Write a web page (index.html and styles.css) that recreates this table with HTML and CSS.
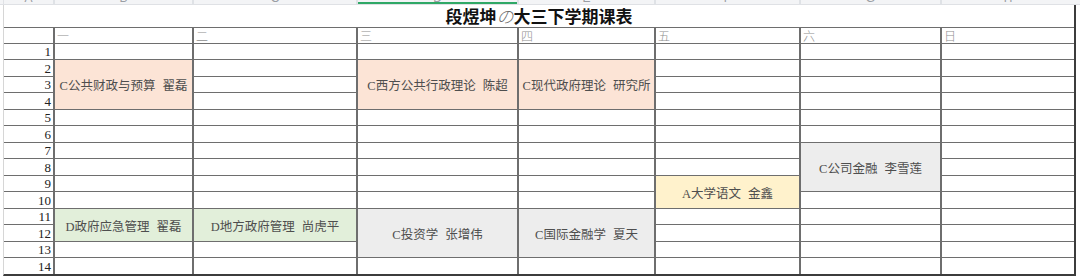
FILE: index.html
```html
<!DOCTYPE html>
<html lang="zh">
<head>
<meta charset="utf-8">
<title>段煜坤の大三下学期课表</title>
<link rel="stylesheet" href="styles.css">
</head>
<body>
<div class="page">
  <div class="colbar-wrap">
    <div class="colbar">
      <div class="ch"><span>A</span></div>
      <div class="ch"><span>B</span></div>
      <div class="ch"><span>C</span></div>
      <div class="ch sel"><span>D</span></div>
      <div class="ch"><span>E</span></div>
      <div class="ch"><span>F</span></div>
      <div class="ch"><span>G</span></div>
      <div class="ch"><span>H</span></div>
    </div>
  </div>
  <div class="sheet">
    <div class="title"><b>段煜坤</b><span class="no">の</span><b>大三下学期课表</b></div>

    <div class="c"></div>
    <div class="c day">一</div>
    <div class="c day">二</div>
    <div class="c day">三</div>
    <div class="c day">四</div>
    <div class="c day">五</div>
    <div class="c day">六</div>
    <div class="c day">日</div>

    <!-- row 1 -->
    <div class="c num">1</div>
    <div class="c"></div><div class="c"></div><div class="c"></div><div class="c"></div><div class="c"></div><div class="c"></div><div class="c"></div>

    <!-- row 2 -->
    <div class="c num">2</div>
    <div class="c course peach span3">C公共财政与预算<span class="t">翟磊</span></div>
    <div class="c"></div>
    <div class="c course peach span3">C西方公共行政理论<span class="t">陈超</span></div>
    <div class="c course peach span3">C现代政府理论<span class="t">研究所</span></div>
    <div class="c"></div><div class="c"></div><div class="c"></div>

    <!-- row 3 -->
    <div class="c num">3</div>
    <div class="c"></div><div class="c"></div><div class="c"></div><div class="c"></div>

    <!-- row 4 -->
    <div class="c num">4</div>
    <div class="c"></div><div class="c"></div><div class="c"></div><div class="c"></div>

    <!-- row 5 -->
    <div class="c num">5</div>
    <div class="c"></div><div class="c"></div><div class="c"></div><div class="c"></div><div class="c"></div><div class="c"></div><div class="c"></div>

    <!-- row 6 -->
    <div class="c num">6</div>
    <div class="c"></div><div class="c"></div><div class="c"></div><div class="c"></div><div class="c"></div><div class="c"></div><div class="c"></div>

    <!-- row 7 -->
    <div class="c num">7</div>
    <div class="c"></div><div class="c"></div><div class="c"></div><div class="c"></div><div class="c"></div>
    <div class="c course gray span3">C公司金融<span class="t">李雪莲</span></div>
    <div class="c"></div>

    <!-- row 8 -->
    <div class="c num">8</div>
    <div class="c"></div><div class="c"></div><div class="c"></div><div class="c"></div><div class="c"></div><div class="c"></div>

    <!-- row 9 -->
    <div class="c num">9</div>
    <div class="c"></div><div class="c"></div><div class="c"></div><div class="c"></div>
    <div class="c course yellow span2">A大学语文<span class="t">金鑫</span></div>
    <div class="c"></div>

    <!-- row 10 -->
    <div class="c num">10</div>
    <div class="c"></div><div class="c"></div><div class="c"></div><div class="c"></div><div class="c"></div><div class="c"></div>

    <!-- row 11 -->
    <div class="c num">11</div>
    <div class="c course green span2">D政府应急管理<span class="t">翟磊</span></div>
    <div class="c course green span2">D地方政府管理<span class="t">尚虎平</span></div>
    <div class="c course gray span3">C投资学<span class="t">张增伟</span></div>
    <div class="c course gray span3">C国际金融学<span class="t">夏天</span></div>
    <div class="c"></div><div class="c"></div><div class="c"></div>

    <!-- row 12 -->
    <div class="c num">12</div>
    <div class="c"></div><div class="c"></div><div class="c"></div>

    <!-- row 13 -->
    <div class="c num">13</div>
    <div class="c"></div><div class="c"></div><div class="c"></div><div class="c"></div><div class="c"></div>

    <!-- row 14 -->
    <div class="c num">14</div>
    <div class="c"></div><div class="c"></div><div class="c"></div><div class="c"></div><div class="c"></div><div class="c"></div><div class="c"></div>
  </div>
</div>
</body>
</html>
```
FILE: styles.css
```css
html, body {
  margin: 0;
  padding: 0;
  background: #ffffff;
}

.page {
  width: 1080px;
  height: 278px;
  overflow: hidden;
  background: #ffffff;
}

.colbar-wrap {
  background: #f3f4f6;
  border-bottom: 1px solid #dfe1e5;
  padding-left: 3px;
}

.colbar {
  display: grid;
  grid-template-columns: 49px 137px 162px 159px 135px 143px 139px 132px;
  column-gap: 2px;
  height: 4px;
  width: 1070px;
  border-left: 1px solid #e0e2e6;
  background: #dfe2e6;
}

.ch {
  background: #f3f4f6;
  display: flex;
  justify-content: center;
  align-items: flex-end;
  overflow: hidden;
  font-family: "Liberation Sans", Arial, sans-serif;
  font-size: 12px;
  line-height: 12px;
  color: #9a9ea4;
}

.ch.sel {
  box-shadow: inset 0 -2px 0 #2fa866;
}

.sheet {
  display: grid;
  grid-template-columns: 49px 137px 162px 159px 135px 143px 139px 132px;
  grid-template-rows: 22px 15px repeat(7, 15px 16px);
  gap: 1px 2px;
  width: 1070px;
  margin-left: 3px;
  border-left: 1px solid #d6d6d6;
  border-right: 2px solid #3c3c3c;
  border-bottom: 2px solid #3c3c3c;
  background: #6e6e6e;
}

.c {
  background: #ffffff;
  min-width: 0;
}

.title {
  grid-column: 1 / -1;
  background: #ffffff;
  display: flex;
  align-items: center;
  justify-content: center;
  font-family: "Noto Sans CJK SC", "Noto Sans", sans-serif;
  font-size: 17px;
  line-height: 22px;
  color: #111111;
}

.title b {
  font-weight: 700;
}

.title .no {
  font-weight: 300;
  font-style: italic;
  color: #6a6a6a;
}

.day {
  font-family: "Noto Sans CJK SC", sans-serif;
  font-size: 12px;
  line-height: 15px;
  color: #8e8e8e;
  padding-left: 2px;
  font-weight: 300;
}

.num {
  display: flex;
  justify-content: flex-end;
  align-items: flex-end;
  padding-right: 2px;
  font-family: "Liberation Serif", "Times New Roman", serif;
  font-size: 13px;
  line-height: 15px;
  color: #222222;
}

.course {
  display: flex;
  align-items: center;
  justify-content: center;
  white-space: nowrap;
  font-family: "Liberation Serif", "Noto Sans CJK SC", serif;
  font-size: 12.5px;
  color: #4e4e4e;
}

.course .t {
  margin-left: 7px;
}

.span2 { grid-row: span 2; }
.span3 { grid-row: span 3; }

.peach { background: #fce4d6; }
.green { background: #e2efda; }
.gray { background: #ededed; }
.yellow { background: #fff2cc; }
```
